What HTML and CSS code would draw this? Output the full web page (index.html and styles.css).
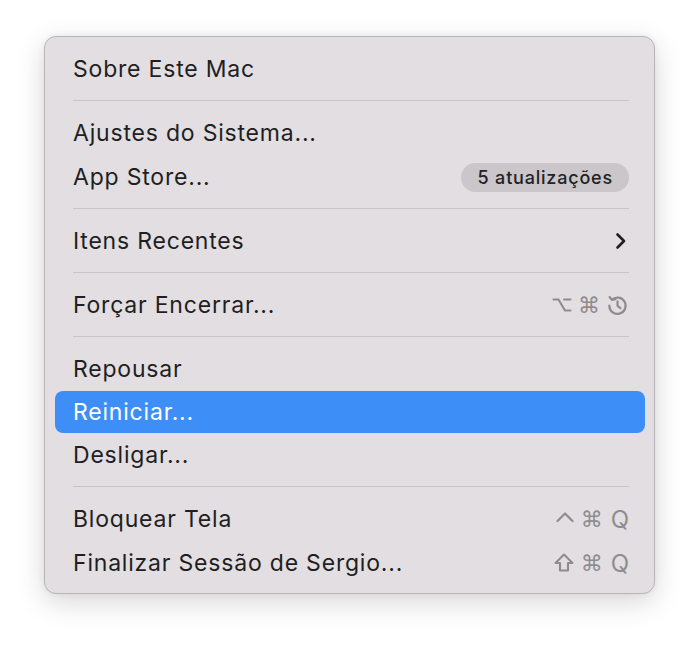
FILE: index.html
```html
<!DOCTYPE html>
<html lang="pt">
<head>
<meta charset="utf-8">
<link rel="stylesheet" href="styles.css">
</head>
<body>
<div class="menu">
  <div class="item"><span class="label">Sobre Este Mac</span></div>
  <div class="sep"></div>
  <div class="item"><span class="label">Ajustes do Sistema...</span></div>
  <div class="item"><span class="label">App Store...</span><span class="badge">5 atualizações</span></div>
  <div class="sep"></div>
  <div class="item"><span class="label">Itens Recentes</span>
    <svg class="chev" width="14" height="20" viewBox="0 0 14 20"><path d="M4.5 3.5 L11 10 L4.5 16.5" fill="none" stroke="#1f1f1f" stroke-width="2.6" stroke-linecap="round" stroke-linejoin="round"/></svg>
  </div>
  <div class="sep"></div>
  <div class="item"><span class="label">Forçar Encerrar...</span>
    <span class="keys">
      <svg width="20" height="20" viewBox="0 0 20 20"><path d="M1.5 4.5 H6.5 L13 15.5 H18.5 M12 4.5 H18.5" fill="none" stroke="#8f8c8f" stroke-width="2.1" stroke-linecap="round" stroke-linejoin="round"/></svg>
      <span class="cmd">⌘</span>
      <svg width="23" height="23" viewBox="0 0 22 22"><path d="M5.6 5.6 A7.8 7.8 0 1 1 3.2 11" fill="none" stroke="#8f8c8f" stroke-width="2.1" stroke-linecap="round"/><path d="M3.4 2.9 L5.6 5.6 L9 5" fill="none" stroke="#8f8c8f" stroke-width="2.1" stroke-linecap="round" stroke-linejoin="round"/><path d="M11 7 V11.3 L13.8 13.4" fill="none" stroke="#8f8c8f" stroke-width="2.1" stroke-linecap="round" stroke-linejoin="round"/></svg>
    </span>
  </div>
  <div class="sep"></div>
  <div class="item"><span class="label">Repousar</span></div>
  <div class="item active"><span class="label">Reiniciar...</span></div>
  <div class="item"><span class="label">Desligar...</span></div>
  <div class="sep"></div>
  <div class="item"><span class="label">Bloquear Tela</span>
    <span class="keys">
      <svg width="20" height="20" viewBox="0 0 20 20"><path d="M2.5 12 L10 4.5 L17.5 12" fill="none" stroke="#8f8c8f" stroke-width="2.2" stroke-linecap="round" stroke-linejoin="round"/></svg>
      <span class="cmd">⌘</span>
      <span class="q">Q</span>
    </span>
  </div>
  <div class="item"><span class="label">Finalizar Sessão de Sergio...</span>
    <span class="keys">
      <svg width="22" height="22" viewBox="0 0 22 22"><path d="M11 2.5 L19.5 11 H15 V18.5 H7 V11 H2.5 Z" fill="none" stroke="#8f8c8f" stroke-width="2.1" stroke-linejoin="round"/></svg>
      <span class="cmd">⌘</span>
      <span class="q">Q</span>
    </span>
  </div>
</div>
</body>
</html>
```
FILE: styles.css
```css
html, body {
  margin: 0;
  padding: 0;
  background: #ffffff;
}
body {
  width: 700px;
  height: 645px;
  font-family: Inter, "Noto Sans", "Liberation Sans", sans-serif;
  padding-top: 36px;
  box-sizing: border-box;
}
.menu {
  margin-left: 44px;
  width: 611px;
  box-sizing: border-box;
  background: #e2dee2;
  border: 1px solid #b8b4b8;
  border-radius: 12px;
  padding: 10px 9px 8px 10px;
  box-shadow: 0 8px 28px rgba(0, 0, 0, 0.16), 0 0 6px rgba(0, 0, 0, 0.06);
}
.item {
  height: 44px;
  display: flex;
  align-items: center;
  justify-content: space-between;
  padding: 0 16px 0 18px;
  border-radius: 8px;
  color: #1f1f1f;
  font-size: 23px;
  letter-spacing: 0.8px;
}
.item.active {
  background: #3d8ff7;
  color: #ffffff;
  height: 42px;
}
.sep {
  height: 1px;
  background: #c8c4c8;
  margin: 9px 16px 10px 18px;
}
.badge {
  background: #cac6ca;
  border-radius: 15px;
  font-size: 18px;
  font-weight: 500;
  height: 29px;
  line-height: 29px;
  padding: 0 16px 0 17px;
  color: #222;
  letter-spacing: 0.8px;
}
.chev {
  margin-right: 2px;
}
.keys {
  display: flex;
  align-items: center;
  gap: 6px;
  color: #8f8c8f;
  letter-spacing: 0;
}
.cmd {
  font-size: 22px;
  font-family: "DejaVu Sans", sans-serif;
}
.q {
  font-size: 24px;
  margin-left: 2px;
}
```
